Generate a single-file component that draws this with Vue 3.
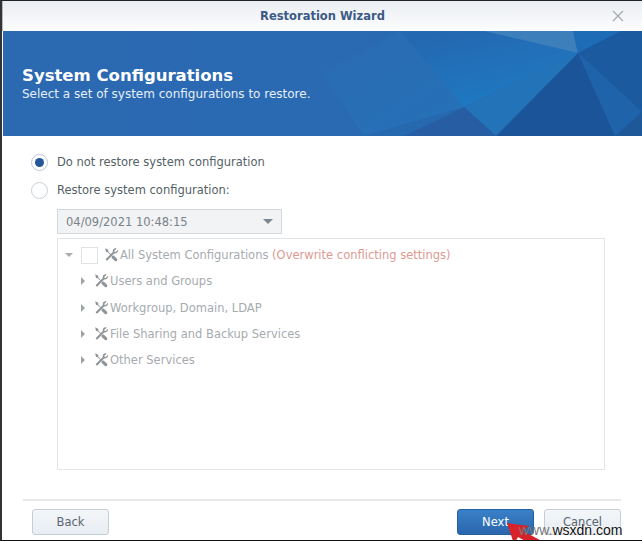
<template>
  <div class="window">
    <header class="titlebar">
      <span class="title">Restoration Wizard</span>
      <svg class="close" viewBox="0 0 12 12"><path d="M1 1l10 10M11 1L1 11" /></svg>
    </header>

    <section class="hero">
      <svg class="hero-bg" viewBox="3 31 639 105" preserveAspectRatio="none">
        <defs>
          <linearGradient id="base" x1="0" x2="1" y1="0" y2="0">
            <stop offset="0" stop-color="#2b69b1" />
            <stop offset="0.5" stop-color="#2a6ab2" />
            <stop offset="1" stop-color="#1f66ad" />
          </linearGradient>
          <linearGradient id="mid" x1="0.3" x2="0.75" y1="0" y2="0.9">
            <stop offset="0" stop-color="#2468b1" />
            <stop offset="1" stop-color="#1e7ac2" />
          </linearGradient>
          <linearGradient id="left" x1="0" x2="1" y1="0.1" y2="0.7">
            <stop offset="0" stop-color="#2a6bb3" />
            <stop offset="1" stop-color="#2473b9" />
          </linearGradient>
        </defs>
        <rect x="3" y="31" width="639" height="105" fill="url(#base)" />
        <polygon points="321,72 400,31 484,31 578,53 464,107 364,136" fill="url(#left)" />
        <polygon points="400,31 484,31 578,53 464,107" fill="url(#mid)" />
        <polygon points="484,31 573,31 578,53" fill="#3d7fbb" />
        <polygon points="573,31 621,31 578,53" fill="#1e6cb5" />
        <polygon points="621,31 642,31 642,112 578,53" fill="#1c5a9f" />
        <polygon points="578,53 642,112 642,136 615,136" fill="#1f64aa" />
        <polygon points="642,112 642,136 615,136" fill="#1f5898" />
        <polygon points="578,53 615,136 496,136" fill="#1c5499" />
        <polygon points="578,53 496,136 464,107" fill="#2273b8" />
        <polygon points="464,107 496,136 404,136" fill="#275ea3" />
        <polygon points="364,136 464,107 404,136" fill="#2669ae" />
      </svg>
      <h1>System Configurations</h1>
      <p>Select a set of system configurations to restore.</p>
    </section>

    <main class="body">
      <label class="radio-row">
        <span class="radio checked"></span>
        Do not restore system configuration
      </label>
      <label class="radio-row">
        <span class="radio"></span>
        Restore system configuration:
      </label>

      <div class="nested">
        <div class="select">
          <span>04/09/2021 10:48:15</span>
          <i class="caret-down"></i>
        </div>

        <div class="tree">
          <div class="tree-row root">
            <i class="caret-open"></i>
            <span class="checkbox"></span>
            <svg class="tools" viewBox="0 0 16 16"><use href="#tools-shape" /></svg>
            <span>All System Configurations <em>(Overwrite conflicting settings)</em></span>
          </div>
          <div v-for="item in items" :key="item" class="tree-row child">
            <i class="caret-closed"></i>
            <svg class="tools" viewBox="0 0 16 16">
              <path d="M2.2 1.2l3 1.6.2 1.9 4 4 1.3-.3 3.6 3.6-.3 1.9-1.8.4-3.7-3.6.3-1.4-4-4-1.8-.2z" />
              <path d="M13.8 1.4l-2.4 2.4.2 1.1 1.1.2 2.3-2.3c.4 1.700-.9 3.700-3 3.700l-.9-.1-6.500 6.800c-1 .9-2.400-.5-1.500-1.500l6.700-6.600-.1-1c0-2 1.900-3.300 3.600-2.700z" />
            </svg>
            <span>{{ item }}</span>
          </div>
        </div>
      </div>
    </main>

    <footer class="footer">
      <button class="btn">Back</button>
      <div class="right">
        <button class="btn primary">Next</button>
        <button class="btn">Cancel</button>
      </div>
    </footer>

    <svg class="arrow" viewBox="0 0 60 30"><path d="M0 0l22 3-6 5 28 15-4 7-29-16-4 7z" /></svg>
    <span class="watermark">www.<b>wsxdn.com</b></span>

    <svg width="0" height="0" class="defs">
      <defs>
        <g id="tools-shape">
          <path d="M2.2 1.2l3 1.6.2 1.9 4 4 1.3-.3 3.6 3.6-.3 1.9-1.8.4-3.7-3.6.3-1.4-4-4-1.8-.2z" />
          <path d="M13.8 1.4l-2.4 2.4.2 1.1 1.1.2 2.3-2.3c.4 1.700-.9 3.700-3 3.700l-.9-.1-6.500 6.800c-1 .9-2.400-.5-1.500-1.500l6.700-6.600-.1-1c0-2 1.900-3.300 3.600-2.700z" />
        </g>
      </defs>
    </svg>
  </div>
</template>

<script setup>
const items = [
  'Users and Groups',
  'Workgroup, Domain, LDAP',
  'File Sharing and Backup Services',
  'Other Services',
];
</script>

<style scoped>
.window {
  position: relative;
  width: 642px;
  height: 541px;
  box-sizing: border-box;
  display: flex;
  flex-direction: column;
  overflow: hidden;
  background: #fff;
  border-top: 1px solid #222;
  border-left: 2px solid #333;
  border-bottom: 1px solid #111;
  font-family: "DejaVu Sans", Verdana, sans-serif;
  color: #5a6570;
}
.titlebar {
  height: 30px;
  flex: none;
  display: flex;
  align-items: center;
  justify-content: center;
  position: relative;
  background: linear-gradient(#eaeef2, #fdfdfe);
  border-left: 1px solid #b5bbc0;
}
.title {
  font-size: 11.500px;
  font-weight: bold;
  color: #3b5a85;
}
.close {
  position: absolute;
  right: 18px;
  top: 9px;
  width: 12px;
  height: 12px;
  fill: none;
  stroke: #a3a9ad;
  stroke-width: 1.200;
}
.hero {
  position: relative;
  height: 105px;
  flex: none;
  box-sizing: border-box;
  padding: 35px 0 0 19px;
  margin-left: 1px;
  color: #fff;
  overflow: hidden;
}
.hero-bg {
  position: absolute;
  inset: 0;
  width: 100%;
  height: 100%;
}
.hero h1, .hero p {
  position: relative;
  margin: 0;
}
.hero h1 {
  font-size: 16.500px;
  line-height: 20px;
  font-weight: bold;
}
.hero p {
  font-size: 12px;
  line-height: 16px;
  color: #e6eef7;
}
.body {
  flex: 1;
  padding: 17px 36px 0 29px;
}
.radio-row {
  display: flex;
  align-items: center;
  gap: 9px;
  height: 18px;
  margin-bottom: 10px;
  font-size: 11.500px;
  color: #555f66;
}
.radio {
  width: 15px;
  height: 15px;
  border: 1px solid #c9d1d8;
  border-radius: 50%;
  background: #fff;
  position: relative;
  flex: none;
}
.radio.checked {
  border-color: #b9c9db;
}
.radio.checked::after {
  content: "";
  position: absolute;
  inset: 3px;
  border-radius: 50%;
  background: #25569b;
}
.nested {
  margin: 0 0 0 26px;
}
.select {
  width: 225px;
  height: 25px;
  box-sizing: border-box;
  display: flex;
  align-items: center;
  justify-content: space-between;
  padding: 0 8px;
  border: 1px solid #d3d9de;
  background: #f1f3f5;
  font-size: 11.500px;
  color: #7a8288;
}
.caret-down {
  width: 0;
  height: 0;
  border: 5px solid transparent;
  border-top: 5px solid #7b868f;
  border-bottom: 0;
}
.tree {
  margin-top: 4px;
  width: 548px;
  height: 232px;
  box-sizing: border-box;
  border: 1px solid #e3e6e8;
  padding-top: 3px;
  font-size: 11.500px;
  color: #a6abaf;
}
.tree-row {
  display: flex;
  align-items: center;
  height: 26.300px;
}
.root {
  padding-left: 7px;
}
.child {
  padding-left: 23px;
}
.caret-open {
  width: 0;
  height: 0;
  border: 4px solid transparent;
  border-top: 4px solid #a6abaf;
  border-bottom: 0;
  margin-right: 8px;
}
.caret-closed {
  width: 0;
  height: 0;
  border: 4px solid transparent;
  border-left: 4px solid #9ea3a7;
  border-right: 0;
  margin-right: 8px;
}
.checkbox {
  width: 15px;
  height: 15px;
  border: 1px solid #dfe3e6;
  margin-right: 5px;
  flex: none;
}
.tools {
  width: 16px;
  height: 16px;
  fill: #8f9498;
  flex: none;
  margin-right: 1px;
}
em {
  font-style: normal;
  color: #dd9a92;
}
.footer {
  flex: none;
  height: 41px;
  margin: 0 21px;
  box-sizing: border-box;
  border-top: 2px solid #e6e8ea;
  padding: 8px 0 0 9px;
  display: flex;
  justify-content: space-between;
}
.right {
  display: flex;
  gap: 10px;
  margin-right: 0;
}
.btn {
  width: 77px;
  height: 26px;
  padding: 0;
  border: 1px solid #c4ced8;
  border-radius: 3px;
  background: linear-gradient(#f3f6f9, #e8edf2);
  font: 11.500px "DejaVu Sans", Verdana, sans-serif;
  color: #5a6570;
}
.primary {
  border-color: #22609f;
  background: linear-gradient(#3a80c8, #2a66ad);
  color: #fff;
}
.arrow {
  position: absolute;
  left: 505px;
  top: 522px;
  width: 60px;
  height: 30px;
  fill: #d8222a;
}
.watermark {
  position: absolute;
  left: 517px;
  top: 521px;
  font: 14px "Liberation Sans", Arial, sans-serif;
  color: #777;
  white-space: nowrap;
}
.watermark b {
  font-weight: normal;
  color: #111;
  text-shadow: 0 0 2px #fff, 0 0 2px #fff;
}
.defs {
  position: absolute;
}
</style>
